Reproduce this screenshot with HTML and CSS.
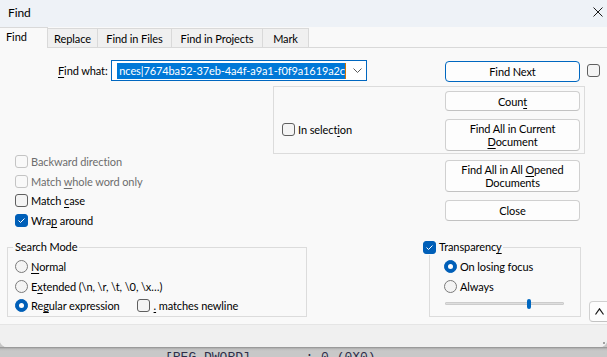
FILE: index.html
```html
<!DOCTYPE html>
<html lang="en">
<head>
<meta charset="utf-8">
<title>Find</title>
<link rel="stylesheet" href="styles.css">
</head>
<body>
<div class="win">
  <div class="titlebar">
    <span class="title">Find</span>
    <svg class="close-x" width="10" height="10" viewBox="0 0 10 10"><path d="M0.5 0.5L9.5 9.5M9.5 0.5L0.5 9.5" stroke="#1a1a1a" stroke-width="1" fill="none"/></svg>
  </div>
  <div class="tabs">
    <div class="tab active">Find</div>
    <div class="tab t-replace">Replace</div>
    <div class="tab t-files">Find in Files</div>
    <div class="tab t-proj">Find in Projects</div>
    <div class="tab t-mark">Mark</div>
  </div>
  <div class="content">
    <div class="findrow">
      <div class="findlabel"><u>F</u>ind what:</div>
      <div class="combo">
        <div class="sel"><span>nces|7674ba52-37eb-4a4f-a9a1-f0f9a1619a2c</span></div>
        <span class="caret"></span>
        <svg class="chev" width="9" height="5" viewBox="0 0 9 5"><path d="M0.5 0.5L4.5 4.5L8.5 0.5" stroke="#5a5a5a" stroke-width="1" fill="none"/></svg>
      </div>
      <div class="btn findnext"><span>Find Next</span></div>
      <span class="cb topcb"></span>
    </div>

    <div class="middle">
      <div class="opts">
        <div class="row dis"><span class="cb"></span><span class="lbl">Backward direction</span></div>
        <div class="row dis"><span class="cb"></span><span class="lbl">Match <u>w</u>hole word only</span></div>
        <div class="row"><span class="cb"></span><span class="lbl">Match <u>c</u>ase</span></div>
        <div class="row"><span class="cb on"><svg width="11" height="11" viewBox="0 0 11 11"><path d="M2.5 5.5L4.5 7.5L8.5 3.5" stroke="#fff" stroke-width="1" fill="none"/></svg></span><span class="lbl">Wra<u>p</u> around</span></div>
      </div>
      <div class="actions">
        <div class="selbox">
          <div class="btn count"><span>Coun<u>t</u></span></div>
          <div class="row insel"><span class="cb"></span><span class="lbl">In select<u>i</u>on</span></div>
          <div class="btn tall cur"><span>Find All in Current<br><u>D</u>ocument</span></div>
        </div>
        <div class="btn tall opened"><span>Find All in All <u>O</u>pened<br>Documents</span></div>
        <div class="btn closebtn"><span>Close</span></div>
      </div>
    </div>

    <div class="bottom">
      <fieldset class="grp mode">
        <legend>Search Mode</legend>
        <div class="row"><span class="rb"></span><span class="lbl"><u>N</u>ormal</span></div>
        <div class="row"><span class="rb"></span><span class="lbl">E<u>x</u>tended (\n, \r, \t, \0, \x…)</span></div>
        <div class="row"><span class="rb on"></span><span class="lbl">Re<u>g</u>ular expression</span><span class="cb dotcb"></span><span class="lbl"><u>.</u> matches newline</span></div>
      </fieldset>
      <fieldset class="grp transp">
        <legend><span class="cb on"><svg width="11" height="11" viewBox="0 0 11 11"><path d="M2.5 5.5L4.5 7.5L8.5 3.5" stroke="#fff" stroke-width="1" fill="none"/></svg></span><span class="lbl">Transparenc<u>y</u></span></legend>
        <div class="row"><span class="rb on"></span><span class="lbl">On losing focus</span></div>
        <div class="row"><span class="rb"></span><span class="lbl">Always</span></div>
        <div class="slider"><span class="track"></span><span class="thumb"></span></div>
      </fieldset>
      <div class="btn collapse"><svg width="9" height="7" viewBox="0 0 9 7"><path d="M0.5 6.5L4.5 0.8L8.5 6.5" stroke="#1a1a1a" stroke-width="1.2" fill="none"/></svg></div>
    </div>
  </div>
  <div class="footer"><span class="grip"></span></div>
</div>
<div class="behind">[REG_DWORD]       : 0 (0X0)</div>
</body>
</html>
```

FILE: styles.css
```css
* { box-sizing: border-box; }

body {
  margin: 0;
  width: 607px;
  height: 357px;
  overflow: hidden;
  background: #c6c6c6;
  font-family: Lato, "Noto Sans", sans-serif;
  font-size: 11px;
  letter-spacing: -0.1px;
  color: #000;
}

u { text-decoration: underline; text-decoration-thickness: 1px; text-underline-offset: 2px; }

.win {
  height: 347px;
  background: #f9f9f9;
  border-radius: 0 0 7px 7px;
  overflow: hidden;
}

.titlebar {
  height: 27px;
  background: #eef2f7;
  display: flex;
  align-items: center;
  padding: 0 4px 3px 8px;
}
.title { flex: 1; font-size: 12px; }

.tabs {
  height: 21px;
  display: flex;
  align-items: flex-end;
  border-bottom: 1px solid #d9d9d9;
}
.tab {
  flex: none;
  height: 19px;
  border: 1px solid #d9d9d9;
  border-left: 0;
  border-bottom: 0;
  background: #f0f0f0;
  display: flex;
  align-items: center;
  justify-content: center;
  white-space: nowrap;
}
.tab.active {
  width: 48px;
  height: 21px;
  margin-bottom: -1px;
  background: #f9f9f9;
  justify-content: flex-start;
  align-items: flex-start;
  padding: 2px 0 0 6px;
}
.t-replace { width: 50px; }
.t-files { width: 74px; }
.t-proj { width: 91px; }
.t-mark { width: 46px; }

.content {
  height: 276px;
  padding-top: 12px;
}

.findrow {
  display: flex;
  align-items: flex-start;
  height: 21px;
}
.findlabel {
  flex: none;
  margin-left: 58px;
  width: 53px;
  line-height: 21px;
  white-space: nowrap;
}
.combo {
  flex: none;
  width: 256px;
  height: 21px;
  border: 1px solid #0067c0;
  background: #fff;
  display: flex;
  align-items: center;
  padding-left: 5px;
}
.sel {
  width: 228px;
  height: 16px;
  line-height: 16px;
  background: #0078d7;
  color: #fff;
  display: flex;
  justify-content: flex-end;
  overflow: hidden;
  white-space: nowrap;
}
.sel span { flex: none; }
.caret { width: 1px; height: 16px; background: #d47500; flex: none; }
.chev { margin-left: 7px; flex: none; }

.btn {
  flex: none;
  border: 1px solid #d0d0d0;
  border-bottom-color: #c2c2c2;
  border-radius: 4px;
  background: #fdfdfd;
  display: flex;
  align-items: center;
  justify-content: center;
  text-align: center;
  white-space: nowrap;
  line-height: 15px;
}
.btn.tall { line-height: 13px; }

.findnext {
  margin-left: 78px;
  margin-top: 1px;
  width: 135px;
  height: 21px;
  border-color: #0067c0;
}

.cb {
  width: 13px;
  height: 13px;
  border: 1px solid #5f5f5f;
  border-radius: 3px;
  background: #f4f4f4;
  margin-right: 3px;
  flex: none;
  display: flex;
}
.cb.on { background: #005fb8; border-color: #005fb8; }
.topcb { margin-left: 7px; margin-top: 4px; }

.rb {
  width: 13px;
  height: 13px;
  border: 1px solid #7a7a7a;
  border-radius: 50%;
  background: #f4f4f4;
  margin-right: 3px;
  flex: none;
  display: flex;
  align-items: center;
  justify-content: center;
}
.rb.on { background: #005fb8; border-color: #005fb8; }
.rb.on::after {
  content: "";
  width: 5px;
  height: 5px;
  border-radius: 50%;
  background: #fff;
}

.row {
  display: flex;
  align-items: center;
  height: 19.5px;
  white-space: nowrap;
}
.dis { color: #6d6d6d; }
.dis .cb { border-color: #c4c4c4; background: #f9f9f9; }

.middle {
  display: grid;
  grid-template-columns: 273px 312px;
  margin-top: 5px;
}
.opts { padding: 66px 0 0 15px; }

.selbox {
  height: 68px;
  border: 1px solid #dcdcdc;
  display: grid;
  grid-template-columns: 1fr 135px;
  grid-template-rows: 20px 32px;
  row-gap: 8px;
  align-content: start;
  padding: 4px 4px 0 8px;
}
.count { grid-column: 2; grid-row: 1; }
.insel { grid-column: 1; grid-row: 2; align-self: start; height: 20px; }
.cur { grid-column: 2; grid-row: 2; }
.opened { margin: 6px 0 0 172px; width: 135px; height: 32px; }
.closebtn { margin: 8px 0 0 172px; width: 135px; height: 21px; }

.bottom {
  display: flex;
  align-items: flex-start;
  margin-top: 9px;
}
.grp {
  flex: none;
  margin: 0;
  min-width: 0;
  height: 78px;
  border: 1px solid #dcdcdc;
  padding: 2px 0 0 5px;
}
.grp legend {
  padding: 0 2px;
  height: 16px;
  line-height: 16px;
  display: flex;
  align-items: center;
  white-space: nowrap;
}
.mode { margin-left: 7px; width: 300px; }
.mode .row { padding-left: 2px; }
.dotcb { margin-left: 17px; margin-right: 4px; }

.transp { margin-left: 122px; width: 152px; padding-left: 0; }
.transp legend { margin-left: -7px; padding: 0 1px 0 0; }
.transp .row { padding-left: 14px; }

.slider {
  margin-left: 15px;
  width: 119px;
  height: 15px;
  display: grid;
  align-items: center;
}
.track {
  grid-area: 1 / 1;
  height: 3px;
  background: #dedede;
  border: 1px solid #cccccc;
  border-radius: 1px;
}
.thumb {
  grid-area: 1 / 1;
  width: 4px;
  height: 10px;
  margin-left: 82px;
  background: #0067c0;
  border-radius: 2px;
}

.collapse {
  margin-left: 8px;
  margin-top: 62px;
  width: 24px;
  height: 21px;
  justify-content: flex-start;
  padding-left: 5px;
}

.footer {
  height: 23px;
  border-top: 1px solid #e5e5e5;
  background: #f0f0f0;
  display: flex;
  justify-content: flex-end;
  align-items: flex-end;
  padding: 0 2px 3px 0;
}
.grip { width: 2px; height: 2px; background: #a0a0a0; }

.behind {
  height: 10px;
  padding: 3px 0 0 165px;
  font-family: "Liberation Mono", monospace;
  font-size: 13px;
  letter-spacing: 0;
  line-height: 15px;
  color: #2e2e48;
  white-space: pre;
  background: linear-gradient(#8e8e8e, #bdbdbd 2px, #c8c8c8 4px);
}
```
